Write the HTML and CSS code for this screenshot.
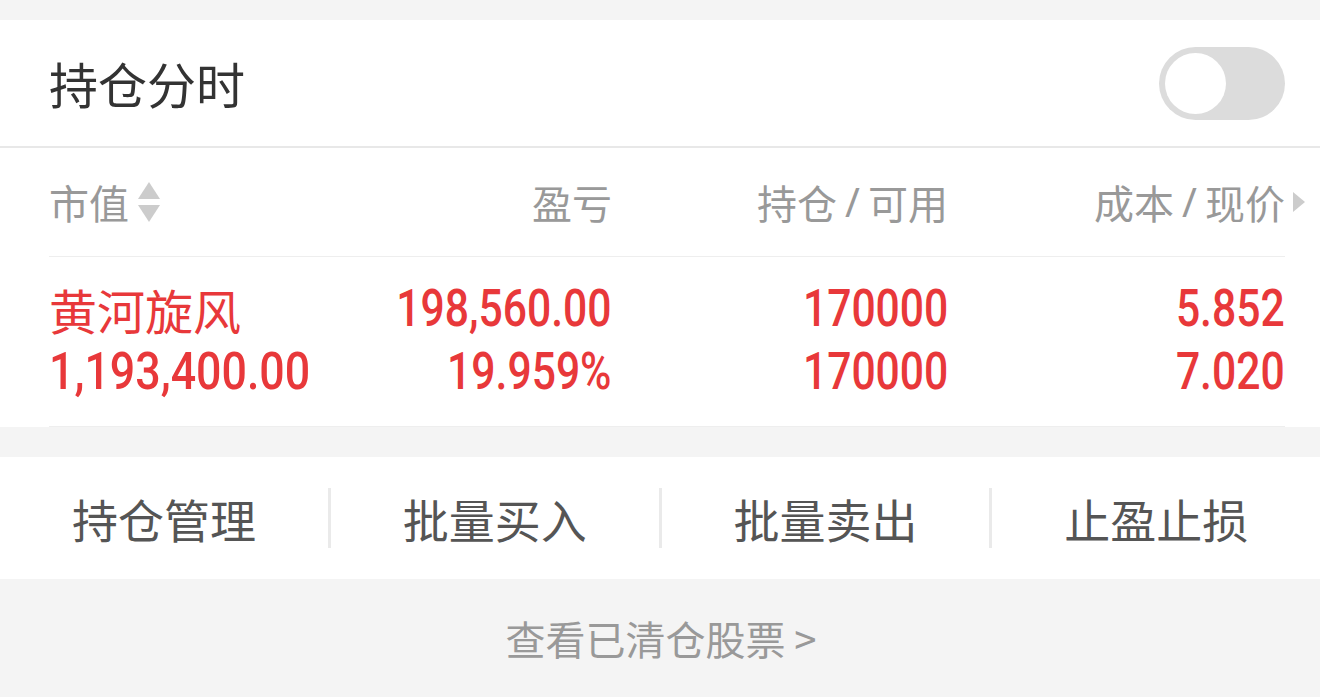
FILE: index.html
```html
<!DOCTYPE html>
<html lang="zh">
<head>
<meta charset="utf-8">
<link rel="stylesheet" href="styles.css">
</head>
<body>
<div class="gap-top"></div>
<section class="panel">
  <div class="title-row">
    <div class="title">持仓分时</div>
    <div class="toggle"><div class="knob"></div></div>
  </div>
  <div class="table">
    <div class="thead">
      <div class="th th-first">市值<svg class="sort" width="22" height="40" viewBox="0 0 22 40"><polygon points="11,0 22,17 0,17" fill="#cccccc"/><polygon points="0,23 22,23 11,40" fill="#cccccc"/></svg></div>
      <div class="th">盈亏</div>
      <div class="th">持仓<span class="slash">/</span>可用</div>
      <div class="th th-last">成本<span class="slash">/</span>现价<svg class="more" width="12" height="20" viewBox="0 0 12 20"><polygon points="0,0 12,10 0,20" fill="#cccccc"/></svg></div>
    </div>
    <div class="tbody">
      <div class="row">
        <div class="td td-first name">黄河旋风</div>
        <div class="td"><span class="num">198,560.00</span></div>
        <div class="td"><span class="num">170000</span></div>
        <div class="td"><span class="num">5.852</span></div>
      </div>
      <div class="row">
        <div class="td td-first"><span class="num num-left">1,193,400.00</span></div>
        <div class="td"><span class="num">19.959%</span></div>
        <div class="td"><span class="num">170000</span></div>
        <div class="td"><span class="num">7.020</span></div>
      </div>
    </div>
  </div>
</section>
<div class="gap-mid"></div>
<nav class="actions">
  <div class="action">持仓管理</div>
  <div class="sep"></div>
  <div class="action">批量买入</div>
  <div class="sep"></div>
  <div class="action">批量卖出</div>
  <div class="sep"></div>
  <div class="action">止盈止损</div>
</nav>
<div class="footer">查看已清仓股票 &gt;</div>
</body>
</html>
```
FILE: styles.css
```css
* { box-sizing: border-box; }
html, body { margin: 0; padding: 0; }
body {
  background: #f4f4f4;
  font-family: "Noto Sans CJK SC", "Noto Sans", sans-serif;
  width: 1320px;
  height: 697px;
  overflow: hidden;
}
.gap-top { height: 20px; }
.panel { background: #ffffff; }
.title-row {
  height: 128px;
  padding: 0 35px 0 49px;
  display: flex;
  align-items: center;
  justify-content: space-between;
  border-bottom: 2px solid #e8e8e8;
}
.title {
  font-size: 49px;
  color: #333333;
  line-height: 1;
  margin-top: -2px;
}
.toggle {
  width: 126px;
  height: 73px;
  border-radius: 37px;
  background: #dcdcdc;
  padding: 6px;
}
.knob {
  width: 61px;
  height: 61px;
  border-radius: 50%;
  background: #ffffff;
}
.table { padding: 0 35px 0 49px; }
.thead, .row {
  display: grid;
  grid-template-columns: 273px 290px 336px 337px;
  align-items: center;
}
.thead {
  height: 109px;
  border-bottom: 1px solid #eeeeee;
}
.th {
  font-size: 40px;
  color: #999999;
  text-align: right;
  line-height: 1;
  display: flex;
  align-items: center;
  justify-content: flex-end;
}
.th-first { justify-content: flex-start; }
.th-last { margin-right: -20px; }
.slash { font-family: "Noto Sans", sans-serif; margin: 0 8px; }
.sort { margin-left: 9px; }
.more { margin-left: 8px; }
.tbody {
  padding: 20px 0 23px;
  border-bottom: 1px solid #eeeeee;
}
.row { height: 63px; }
.td {
  color: #e8383a;
  text-align: right;
  line-height: 1;
}
.td-first { text-align: left; }
.name { font-size: 48px; }
.num {
  display: inline-block;
  font-family: "Roboto", sans-serif;
  font-weight: 500;
  font-size: 52px;
  transform: scaleX(0.82);
  transform-origin: right center;
}
.num-left {
  transform: scaleX(0.86);
  transform-origin: left center;
}
.gap-mid { height: 30px; }
.actions {
  background: #ffffff;
  height: 122px;
  display: flex;
  align-items: center;
}
.action {
  flex: 1;
  text-align: center;
  font-size: 46px;
  color: #555555;
  line-height: 1;
}
.sep {
  width: 3px;
  height: 60px;
  background: #eaeaea;
}
.footer {
  height: 118px;
  display: flex;
  align-items: center;
  justify-content: center;
  font-size: 40px;
  color: #999999;
  padding-left: 2px;
}
```
